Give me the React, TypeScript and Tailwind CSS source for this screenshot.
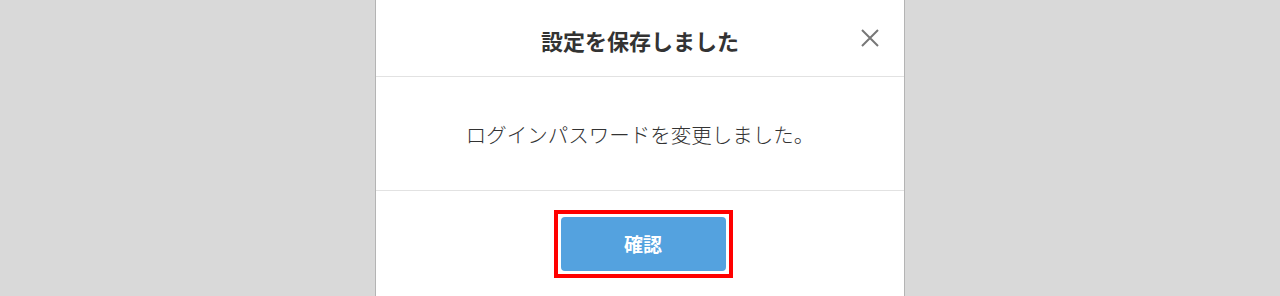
export default function App() {
  return (
    <div
      className="flex h-[296px] w-full justify-center overflow-hidden bg-[#d9d9d9]"
      style={{ fontFamily: '"Noto Sans CJK JP", "Noto Sans", sans-serif' }}
    >
      <div className="mt-[-8px] h-[320px] w-[530px] shrink-0 rounded-[6px] border border-[#b4b4b4] bg-white">
        {/* header */}
        <div className="relative flex h-[84px] items-start justify-center border-b border-[#e2e2e2] pt-[32px]">
          <h2 className="text-[22px] leading-[30px] font-bold text-[#333]">設定を保存しました</h2>
          <button className="absolute top-[36px] right-[25px] text-[#777]">
            <svg width="18" height="18" viewBox="0 0 18 18" fill="none" stroke="currentColor" strokeWidth="2">
              <path d="M1 1L17 17M17 1L1 17" />
            </svg>
          </button>
        </div>

        {/* body */}
        <div className="flex h-[114px] items-center justify-center border-b border-[#e2e2e2]">
          <p className="text-[20.5px] leading-[28px] font-light text-[#333]">ログインパスワードを変更しました。</p>
        </div>

        {/* footer */}
        <div className="flex justify-center pt-[19px] pl-[6px]">
          <div className="border-4 border-[#ff0000] bg-white p-[3px]">
            <button className="h-[54px] w-[165px] rounded-[4px] bg-[#54a2df] text-[19px] font-bold text-white">
              確認
            </button>
          </div>
        </div>
      </div>
    </div>
  )
}
